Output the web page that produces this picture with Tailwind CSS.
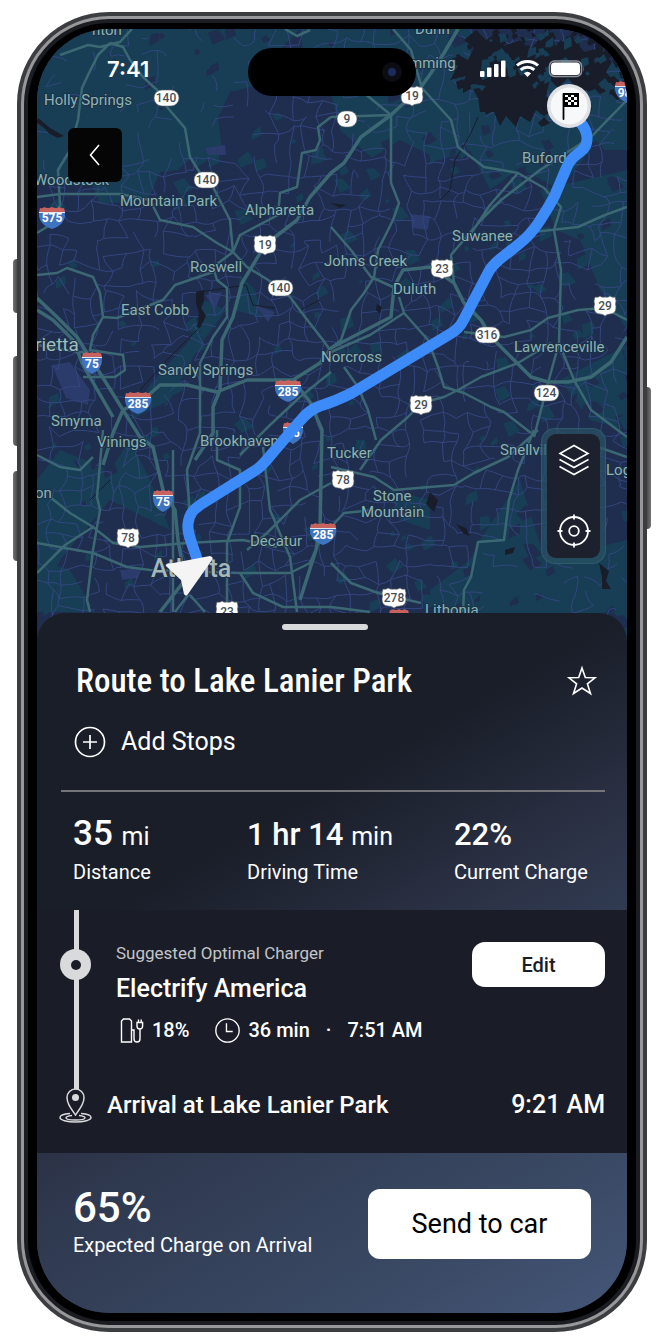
<!DOCTYPE html>
<html lang="en">
<head>
<meta charset="utf-8">
<meta name="viewport" content="width=device-width, initial-scale=1">
<title>Route to Lake Lanier Park</title>
<script src="https://cdn.jsdelivr.net/npm/@tailwindcss/browser@4"></script>
</head>
<body class="bg-white font-[Roboto,sans-serif] text-white">
<main class="relative mt-3 mr-[15px] mb-3 ml-[17px]">
  <!-- side buttons -->
  <span class="absolute -left-1 top-[247px] h-[54px] w-2 rounded-l-sm bg-gradient-to-r from-neutral-500 to-neutral-800"></span>
  <span class="absolute -left-1 top-[344px] h-[90px] w-2 rounded-l-sm bg-gradient-to-r from-neutral-500 to-neutral-800"></span>
  <span class="absolute -left-1 top-[459px] h-[90px] w-2 rounded-l-sm bg-gradient-to-r from-neutral-500 to-neutral-800"></span>
  <span class="absolute -right-1 top-[375px] h-[142px] w-2 rounded-r-sm bg-gradient-to-l from-neutral-500 to-neutral-800"></span>

  <!-- metal rim, bezel, screen -->
  <div class="relative rounded-[92px] bg-[#3c3d40] p-1">
   <div class="rounded-[88px] bg-[#98989a] p-[3px]">
    <div class="rounded-[85px] bg-[#1c1d22] p-1">
     <div class="rounded-[81px] bg-black px-[9px] pt-[6px] pb-[8px]">
      <div class="relative overflow-hidden rounded-[72px] bg-[#1a1e29]">

        <section aria-label="Map" class="relative h-[624px] bg-[#1f2d4f]">
          <svg class="absolute inset-0 h-full w-full" viewBox="37 29 590 624" preserveAspectRatio="xMidYMin slice" font-family="Roboto, sans-serif">
            <defs>
              <g id="interstate">
                <path d="M-12-9q3 1 4-1 4 2 8 0 4 2 8 0 1 2 4 1l1 4h-26z" fill="#c8625e"/>
                <path d="M-13-4H13Q14 7 0 12-14 7-13-4z" fill="#3f74c0"/>
                <path d="M-13-4.500H13" stroke="#dfe6f0" stroke-width="1"/>
              </g>
              <g id="interstate-s">
                <path d="M-9-9q2 1 3-1 3 2 6 0 3 2 6 0 1 2 3 1l1 4h-20z" fill="#c8625e"/>
                <path d="M-10-4H10Q11 7 0 12-11 7-10-4z" fill="#3f74c0"/>
                <path d="M-10-4.500H10" stroke="#dfe6f0" stroke-width="1"/>
              </g>
              <path id="us" d="M-10-9q3 1 5-1 2 2 5 1 3 1 5-1 2 2 5 1l1 4q-1 3 0 6 0 7-6 7-3 0-5 2-2-2-5-2-6 0-6-7 1-3 0-6z" fill="#fff" stroke="#5a5f66" stroke-width=".6"/>
              <path id="us-w" d="M-11-9q3 1 5-1 3 2 6 1 3 1 6-1 2 2 5 1l1 4q-1 3 0 6 0 7-6 7-4 0-6 2-2-2-6-2-6 0-6-7 1-3 0-6z" fill="#fff" stroke="#5a5f66" stroke-width=".6"/>
              <rect id="state" x="-12" y="-8" width="25" height="16" rx="8" fill="#fff" stroke="#5a5f66" stroke-width=".6"/>
              <rect id="state-s" x="-10" y="-8" width="20" height="16" rx="8" fill="#fff" stroke="#5a5f66" stroke-width=".6"/>
            </defs>
            <rect x="37" y="29" width="590" height="624" fill="#1f2d4f"/>
            <!-- woodland -->
            <g fill="#183e55">
              <path d="M37 29H300L262 68 255 86 230 92 218 118 222 150 196 168 160 172 148 200 100 204 90 180 60 186 37 176z"/>
              <path d="M300 29H470L500 60 560 60 627 60V150L590 150 560 190 520 168 490 190 470 150 440 160 400 140 372 158 340 130 330 90 310 96z"/>
              <path d="M540 190 627 170V330L600 290 580 240 556 230z"/>
              <path d="M480 540 520 480 545 560 627 540V653H440L430 590 470 560z"/>
              <path d="M37 480 60 450 110 470 130 440 150 480 170 530 110 500 60 560 37 610z"/>
              <path d="M150 385 190 340 205 300 226 310 200 345 170 400 130 420z"/>
              <path d="M37 560 70 570 95 612H37z"/>
              <path d="M240 275 255 290 262 318 235 310z"/>
              <path d="M390 490 430 500 430 530 400 520z"/>
              <path d="M560 380 627 345V430L590 420z"/>
            </g>
            <g id="patches"></g>
            <g fill="#2b3b6b">
              <path d="M52 365 70 362 90 390 88 405 66 398z"/><path d="M205 148 225 145 226 155 208 155z"/><path d="M205 295 222 292 215 310z"/><path d="M410 214 430 216 428 230 412 228z"/><path d="M120 570 140 568 138 578 122 580z"/><path d="M255 305 275 312 268 322z"/>
            </g>
            <path id="minor" fill="none" stroke="#33467f" stroke-width="1"/>
            <!-- water -->
            <g fill="#191d2a">
              <path d="M476 30 486 40 497 33 504 46 520 40 530 50 545 32 556 46 572 36 584 52 600 48 612 62 606 72 616 84 604 82 600 94 590 84 578 92 568 78 558 88 550 80 546 96 556 108 544 116 536 110 530 122 520 116 516 127 506 116 500 126 494 112 480 112 478 96 486 86 474 84 460 88 466 76 450 80 458 66 448 60 460 56 468 60 474 48 464 40z"/>
              <path id="coves"/>
              <path id="islets" fill="#183e55"/>
              <path d="M38 118l12 10 14 8-6 2-8-4-6-6-8-6zM196 292l8-2 0 10-3 8 5 8-6 12-3-1 2-14-3-10zM430 492l8 8-4 12-8-8zM456 524l10 4 4 8-6-2zM505 550l10-3-2 6-8 2zM599 563l10 8-3 10 5 8-9 0 0-12zM330 203l16 2-6 3zM377 304l5 3-2 7-4-4z"/>
              <path d="M478 117 470 135 455 160 450 190 440 200M200 292 246 285 253 305 275 308M300 310l20-10M197 330 170 357 140 390M90 500 110 480" fill="none" stroke="#191d2a" stroke-width="1"/>
            </g>
            <!-- highways -->
            <g fill="none" stroke="#3b6873" stroke-width="2.500" stroke-linejoin="round">
              <path d="M60 55 88 45 100 47 120 42 132 29M110 43 98 55 88 75 82 88 78 120 70 150 58 170 60 205 50 225 37 233"/>
              <path d="M110 43 123 47 130 60 143 77 157 90 167 107 185 128 190 157 200 173 213 187 230 220 233 252M37 197 60 194 120 194 150 200 160 220 193 227 217 243 233 252 247 267 273 283 290 297 305 317 323 340 330 350"/>
              <path d="M331 117 318 127 320 140 316 150 302 153 297 187 280 193 278 215 240 235 233 252 213 267 217 280 227 288 227 317 213 337 200 363 200 433 187 470 190 520"/>
              <path stroke-width="3.500" d="M458 29 444 53 431 73 421 87 391 115 361 137 344 163 331 173 310 197 297 220 265 245 242 283 233 317 222 340 220 390 213 407 213 433 195 460"/>
              <path d="M285 29 297 36 310 30M393 29 411 50 421 85M331 117 391 115 391 183 399 203 393 220 378 250 374 277 364 293 351 310 341 340 331 348M364 93 391 115M421 87 451 120 458 147 484 167 518 173 544 188 561 207 554 230 561 270 559 343 548 383 534 437"/>
              <path d="M627 100 591 137 540 170 501 200 481 220 451 255 454 283M518 173 490 205 470 235M533 232 578 227 605 215 627 207"/>
              <path stroke-width="3.500" d="M37 298 57 317 77 337 87 353 100 373 123 410 140 437 153 447 163 490 175 510 178 540 185 580 160 612M37 310 53 320 73 340 83 365 113 417"/>
              <path stroke-width="3.500" d="M103 465 113 433 123 410 143 400 160 385 187 385 217 392 247 380 293 380 310 402 322 430 320 527 316 550 300 600M293 380 320 363 331 348 391 317 394 287 403 270 431 267 454 283 464 303 481 320 491 337 514 360 531 377 548 382 568 382 591 377 611 362 627 337"/>
              <path d="M37 275 57 273 67 268 93 277 100 293 103 317 117 318 163 300 175 285 213 272M103 317 93 335 90 350 123 355 125 370 115 377 83 377M37 345 66 350 87 353"/>
              <path d="M331 227 351 250 371 277 393 287M464 332 504 337 531 330 548 318 578 310 604 308 627 320M559 343 574 380 591 410 627 437M551 343 518 363 481 377 458 390 444 397 421 403 408 417 381 440 360 470"/>
              <path d="M399 297 404 313 428 340 438 367 444 387 464 393 491 407 504 412 531 433M404 313 370 335 331 352M344 367 358 387 368 410 376 440M331 372 300 397 270 425 240 455"/>
              <path d="M103 430 97 497 100 510 93 550 87 600 90 612M37 455 60 467 80 470 93 457M50 497 70 513 93 527 113 543 140 547 187 543 243 540 277 547M37 573 65 545 93 527M37 543 93 553 127 567 150 570 240 573 290 573 310 563 320 540"/>
              <path d="M173 450 173 612M227 610 227 543 240 507 240 470 217 460 217 430M263 447 270 510 290 557 297 612M331 483 300 500 267 533 247 550M240 573 253 593 283 607 331 607 370 612M188 595 175 612M190 595 205 612"/>
              <path d="M331 467 374 477 394 490 454 485 474 473 508 457 538 430M534 430 518 470 509 500 504 540 478 542 471 577 464 590 463 612M331 527 344 513 374 510M331 563 351 583 378 593 421 603M598 447 627 457"/>
            </g>
            <!-- place names -->
            <g fill="#8db3b3" font-size="15" stroke="#1c3148" stroke-width="2" paint-order="stroke" stroke-linejoin="round">
              <text x="92" y="35">nton</text><text x="415" y="34">Dunn</text><text x="391" y="68">Cumming</text>
              <text x="44" y="105">Holly Springs</text><text x="34" y="185">Woodstock</text>
              <text x="120" y="206">Mountain Park</text><text x="245" y="215">Alpharetta</text>
              <text x="522" y="163">Buford</text><text x="452" y="241">Suwanee</text>
              <text x="190" y="272">Roswell</text><text x="324" y="266">Johns Creek</text>
              <text x="393" y="294">Duluth</text><text x="121" y="315">East Cobb</text>
              <text x="321" y="362">Norcross</text><text x="514" y="352">Lawrenceville</text>
              <text x="158" y="375">Sandy Springs</text><text x="51" y="426">Smyrna</text>
              <text x="97" y="447">Vinings</text><text x="200" y="446">Brookhaven</text>
              <text x="327" y="458">Tucker</text><text x="500" y="455">Snellville</text>
              <text x="606" y="475">Loganville</text><text x="35" y="498">on</text>
              <text x="373" y="501">Stone</text><text x="361" y="517">Mountain</text>
              <text x="250" y="546">Decatur</text><text x="425" y="615">Lithonia</text>
              <text x="35" y="351" font-size="19" fill="#a0bdbb">rietta</text>
              <text x="151" y="577" font-size="25" fill="#a5b7bb" font-weight="500">Atlanta</text>
            </g>
            <!-- road shields -->
            <g font-size="12" font-weight="500" text-anchor="middle" fill="#4a4f55">
              <use href="#state" x="166" y="98"/><text x="166" y="102">140</text>
              <use href="#state" x="206" y="180"/><text x="206" y="184">140</text>
              <use href="#state" x="280" y="288"/><text x="280" y="292">140</text>
              <use href="#state-s" x="347" y="119"/><text x="347" y="123">9</text>
              <use href="#state" x="487" y="335"/><text x="487" y="339">316</text>
              <use href="#state" x="546" y="393"/><text x="546" y="397">124</text>
              <use href="#us" x="412" y="96"/><text x="412" y="100">19</text>
              <use href="#us" x="265" y="245"/><text x="265" y="249">19</text>
              <use href="#us" x="442" y="269"/><text x="442" y="273">23</text>
              <use href="#us" x="605" y="306"/><text x="605" y="310">29</text>
              <use href="#us" x="421" y="405"/><text x="421" y="409">29</text>
              <use href="#us" x="343" y="480"/><text x="343" y="484">78</text>
              <use href="#us" x="128" y="538"/><text x="128" y="542">78</text>
              <use href="#us" x="227" y="611"/><text x="227" y="616">23</text>
              <use href="#us-w" x="394" y="598"/><text x="394" y="602">278</text>
            </g>
            <g font-size="12" font-weight="700" text-anchor="middle" fill="#fff">
              <use href="#interstate" x="52" y="217"/><text x="52" y="222">575</text>
              <use href="#interstate-s" x="92" y="362"/><text x="92" y="368">75</text>
              <use href="#interstate" x="138" y="402"/><text x="138" y="408">285</text>
              <use href="#interstate" x="288" y="390"/><text x="288" y="396">285</text>
              <use href="#interstate-s" x="293" y="432"/><text x="293" y="437">85</text>
              <use href="#interstate-s" x="163" y="500"/><text x="163" y="506">75</text>
              <use href="#interstate" x="323" y="533"/><text x="323" y="539">285</text>
              <use href="#interstate" x="628" y="91"/><text x="628" y="97">985</text>
              <use href="#interstate-s" x="399" y="619"/>
            </g>
            <!-- route -->
            <path d="M198 562C192 542 187 535 188 524 189 513 194 509 203 503L256 470C262 466 266 461 270 456L300 421C306 414 311 409 320 406 333 402 340 399 352 393L450 334C457 330 460 327 463 321L488 273C491 267 494 264 500 259L519 244C528 237 533 231 539 222 546 211 550 205 555 195L566 169C570 159 574 157 580 152 590 145 589 131 579 121" fill="none" stroke="#3d8bf8" stroke-width="11"/>
            <path d="M168 564 210 556Q214 557 212 560L188 594Q186 597 184 594L181 580 167 567Q164 564 168 564z" fill="#f4f4f5"/>
            <!-- destination -->
            <circle cx="569" cy="106" r="22" fill="#dfe1e5"/><circle cx="569" cy="106" r="18.500" fill="#f7f8f9"/>
            <path d="M563.500 94v25" stroke="#000" stroke-width="1.800" stroke-linecap="round"/>
            <path d="M563 93h16v14h-16z"/>
            <path d="M565 95h3v2h-3zM571 95h3v2h-3zM568 97h3v3h-3zM574 97h3v3h-3zM565 100h3v2h-3zM571 100h3v2h-3zM568 102h3v3h-3zM574 102h3v3h-3z" fill="#fff"/>
          </svg>

          <header class="relative flex h-20 items-center justify-between pr-[43px] pl-[70px]">
            <time class="font-[Inter,sans-serif] text-[22px] font-semibold">7:41</time>
            <svg class="h-6 w-[104px]" viewBox="480 57 104 24" aria-label="Signal, Wi-Fi, battery">
              <g fill="#fff"><rect x="480" y="71" width="4.500" height="6" rx="1"/><rect x="487" y="67.500" width="4.500" height="9.500" rx="1"/><rect x="494" y="64" width="4.500" height="13" rx="1"/><rect x="501" y="60.500" width="4.500" height="16.500" rx="1"/>
              <path d="M527.500 77l-3.600-3.800a5.500 5.500 0 0 1 7.200 0z"/></g>
              <path d="M517 65.500a15.500 15.500 0 0 1 21 0M520.700 69.900a10 10 0 0 1 13.600 0" fill="none" stroke="#fff" stroke-width="3"/>
              <rect x="549.500" y="61" width="32" height="15.500" rx="5" fill="none" stroke="#8d949c" stroke-width="1.500"/><rect x="551" y="62.500" width="29" height="12.500" rx="3.500" fill="#fff"/><path d="M583.500 66.500q1.500 2 0 5z" fill="#8d949c"/>
            </svg>
          </header>
          <div class="absolute top-[19px] left-1/2 flex h-12 w-[168px] -translate-x-1/2 items-center justify-end rounded-full bg-black pr-[14px]">
            <span class="grid size-5 place-items-center rounded-full bg-[#0b0c14]"><span class="size-2 rounded-full bg-[#1d2a5c]"></span></span>
          </div>

          <button type="button" aria-label="Back" class="absolute top-[99px] left-[31px] grid size-[54px] place-items-center rounded-md bg-[#050506]">
            <svg class="h-6 w-4" viewBox="0 0 16 24" fill="none" stroke="#fff" stroke-width="1.600"><path d="M12 2 3.500 12 12 22"/></svg>
          </button>

          <div class="absolute top-[399px] right-[21px] rounded-[14px] border border-[#3a6a78]/50 bg-[#2a5364]/70 p-[5px]">
            <div class="flex w-[53px] flex-col items-center gap-[34px] rounded-[9px] bg-[#1d212e] px-2 py-[9px]">
              <button type="button" aria-label="Map layers" class="size-9">
                <svg viewBox="0 0 36 36" fill="none" stroke="#fff" stroke-width="1.600"><path d="M18 2.500 32 10.500 18 18 4 10.500zM3.500 16.500 18 24.500 32.500 16.500M3.500 23.500 18 31.500 32.500 23.500"/></svg>
              </button>
              <button type="button" aria-label="Center on my location" class="size-9">
                <svg viewBox="0 0 36 36" fill="none" stroke="#fff" stroke-width="1.800"><circle cx="18" cy="18" r="14"/><circle cx="18" cy="18" r="4.800"/><path d="M18 1.500v5M18 29.500v5M1.500 18h5M29.500 18h5"/></svg>
              </button>
            </div>
          </div>
        </section>

        <section aria-label="Route details" class="relative -mt-10 rounded-t-[28px] bg-[linear-gradient(150deg,#1a1e29_33%,#2c3246_52%,#303b52_62%,#3a4964_84%,#445678_100%)]">
          <div class="flex h-[297px] flex-col pt-[11px] pr-[22px] pl-6">
            <span class="mr-4 h-[6px] w-[86px] shrink-0 self-center rounded-full bg-[#d9dadc]"></span>
            <div class="mt-[33px] flex items-center justify-between pr-[7px] pl-[15px]">
              <h1 class="font-['Roboto_Condensed',Roboto,sans-serif] text-[33px] leading-9 font-medium">Route to Lake Lanier Park</h1>
              <button type="button" aria-label="Save route" class="size-8">
                <svg viewBox="0 0 32 32" fill="none" stroke="#fff" stroke-width="1.600"><path d="M16 3 19.300 12.500 29 12.800 21.400 18.800 24.500 28.500 16 23 7.500 28.500 10.600 18.800 3 12.800 12.700 12.500z"/></svg>
              </button>
            </div>
            <button type="button" class="mt-[25px] ml-[13px] flex items-center gap-[15px] self-start text-[25px] leading-9">
              <svg class="size-8" viewBox="0 0 32 32" fill="none" stroke="#fff" stroke-width="1.700"><circle cx="16" cy="16" r="14.500"/><path d="M9 16h14M16 9v14"/></svg>
              Add Stops
            </button>
            <hr class="mt-[30px] border-t-2 border-[#747579]">
            <dl class="mt-[22px] grid grid-cols-[174px_207px_1fr] pl-3 whitespace-nowrap">
              <div class="flex flex-col-reverse justify-end"><dt class="text-[20px] leading-7">Distance</dt><dd class="h-11 text-[35px] leading-10 font-medium">35 <span class="text-[25px] leading-none font-normal">mi</span></dd></div>
              <div class="flex flex-col-reverse justify-end"><dt class="text-[20px] leading-7">Driving Time</dt><dd class="h-11 text-[31px] leading-[42px] font-medium">1 hr 14 <span class="text-[25px] leading-none font-normal">min</span></dd></div>
              <div class="flex flex-col-reverse justify-end"><dt class="text-[20px] leading-7">Current Charge</dt><dd class="h-11 text-[31px] leading-[42px] font-medium">22%</dd></div>
            </dl>
          </div>

          <ol class="relative h-[243px] bg-[#1a1d27] pr-[22px]">
            <li class="flex h-[172px] items-start">
              <div class="relative ml-[23px] h-[182px] w-8 shrink-0">
                <span class="mx-auto block h-full w-[5px] bg-[#d9dadc]"></span>
                <span class="absolute top-[39px] left-0 grid size-[31px] place-items-center rounded-full bg-[#d9dadc]"><span class="size-[10px] rounded-full bg-[#1a1d27]"></span></span>
              </div>
              <div class="flex-1 pt-[29px] pl-6">
                <p class="text-[17px] leading-7 text-[#c3c4c7]">Suggested Optimal Charger</p>
                <h2 class="mt-1 text-[25px] leading-9 font-medium">Electrify America</h2>
                <p class="mt-[9px] flex items-center text-[20px] leading-7 font-medium whitespace-nowrap">
                  <svg class="mr-[6px] ml-1 h-[26px] w-[26px]" viewBox="0 0 26 26" fill="none" stroke="#fff" stroke-width="1.400"><path d="M1.500 25V4l2-2h6l2 2v21zM11.500 13h2.500v9q0 3 3 3t3-3v-10M17 5.500v3.500q0 3 2.800 3t2.800-3V5.500zM18.500 5.500V2.500M21.200 5.500V2.500"/></svg>
                  18%
                  <svg class="mr-2 ml-[26px] size-[25px]" viewBox="0 0 24 24" fill="none" stroke="#fff" stroke-width="1.300"><circle cx="12" cy="12" r="11.200"/><path d="M11 5v8h6"/></svg>
                  36 min<span class="mx-4">·</span>7:51 AM
                </p>
              </div>
              <button type="button" class="mt-8 h-[45px] w-[133px] rounded-[13px] bg-white text-[20px] font-medium text-[#1a1d27]">Edit</button>
            </li>
            <li class="flex items-center justify-between">
              <div class="flex items-center gap-[14px]">
                <svg class="relative ml-[21px] h-9 w-[35px] shrink-0" viewBox="0 0 35 36" fill="none" stroke="#d9dadc" stroke-width="1.500"><path d="M12 26.500C5 27 2 28.500 2 30.500 2 33 9 35 17.500 35S33 33 33 30.500C33 28.500 30 27 23 26.500M14 28.500c-4 .5-6 1-6 2.200 0 1.500 4 2.300 9.500 2.300s9.500-.8 9.500-2.300c0-1.200-2-1.700-6-2.200"/><path d="M17.500 28C12 20 9 16 9 10.500a8.500 8.500 0 0 1 17 0c0 5.500-3 9.500-8.500 17.500z" fill="#1a1d27"/><circle cx="17.500" cy="10.500" r="3.500" fill="#d9dadc" stroke="none"/></svg>
                <span class="text-[24px] leading-[46px] font-medium">Arrival at Lake Lanier Park</span>
              </div>
              <time class="text-[25px] leading-[42px] font-medium">9:21 AM</time>
            </li>
          </ol>

          <div class="flex h-40 items-start justify-between pr-9 pl-9">
            <dl class="flex flex-col-reverse pt-8"><dt class="text-[20px] leading-7">Expected Charge on Arrival</dt><dd class="text-[42px] leading-[46px] font-medium">65%</dd></dl>
            <button type="button" class="mt-9 h-[70px] w-[223px] rounded-xl bg-white text-[27px] text-black">Send to car</button>
          </div>
        </section>
      </div>
     </div>
    </div>
   </div>
  </div>
</main>
<script>
// Fills the map with minor streets, small woodland patches and the lake's coves.
let seed = 7;
const rnd = () => (seed = (seed * 16807) % 2147483647) / 2147483647;
const step = 15, cols = 42, rows = 42, pts = [];
for (let r = 0; r <= rows; r++) {
  pts.push([]);
  for (let c = 0; c <= cols; c++) {
    pts[r].push([34 + c * step + (rnd() - .5) * 12, 26 + r * step + (rnd() - .5) * 12]);
  }
}
let d = '';
const link = (a, b) => {
  const mx = (a[0] + b[0]) / 2 + (rnd() - .5) * 7, my = (a[1] + b[1]) / 2 + (rnd() - .5) * 7;
  d += `M${a[0].toFixed(1)} ${a[1].toFixed(1)}Q${mx.toFixed(1)} ${my.toFixed(1)} ${b[0].toFixed(1)} ${b[1].toFixed(1)}`;
};
for (let r = 0; r < rows; r++) {
  for (let c = 0; c < cols; c++) {
    const quiet = (r < 9 && c < 16) || (r > 33 && c > 28);
    const p = quiet ? .22 : .66;
    if (rnd() < p) link(pts[r][c], pts[r][c + 1]);
    if (rnd() < p) link(pts[r][c], pts[r + 1][c]);
  }
}
document.getElementById('minor').setAttribute('d', d);

const shard = (x, y, s) => `M${x.toFixed(0)} ${y.toFixed(0)}l${s.toFixed(0)} ${(-s * rnd()).toFixed(0)} ${(s * rnd()).toFixed(0)} ${s.toFixed(0)} ${(-s * 1.2).toFixed(0)} ${(s * .6).toFixed(0)}z`;
let woods = '', clear = '';
for (let i = 0; i < 560; i++) {
  const x = 37 + rnd() * 590, y = 29 + rnd() * 600, shape = shard(x, y, 3 + rnd() * 8);
  const edge = x > 400 || y < 210 || (x < 170 && y > 440);
  if (edge && rnd() < .5) clear += shape; else if (edge || rnd() < .2) woods += shape;
}
document.getElementById('patches').innerHTML = `<path fill="#1f2d4f" d="${clear}"/><path fill="#183e55" d="${woods}"/>`;

let coves = '', islets = '';
for (let i = 0; i < 130; i++) {
  const a = rnd() * 6.283, k = .5 + rnd() * .6;
  coves += shard(535 + Math.cos(a) * 80 * k, 72 + Math.sin(a) * 46 * k, 2 + rnd() * 5);
  if (i % 3 === 0) islets += shard(480 + rnd() * 120, 34 + rnd() * 50, 2 + rnd() * 6);
}
document.getElementById('coves').setAttribute('d', coves);
document.getElementById('islets').setAttribute('d', islets);
</script>
</body>
</html>
